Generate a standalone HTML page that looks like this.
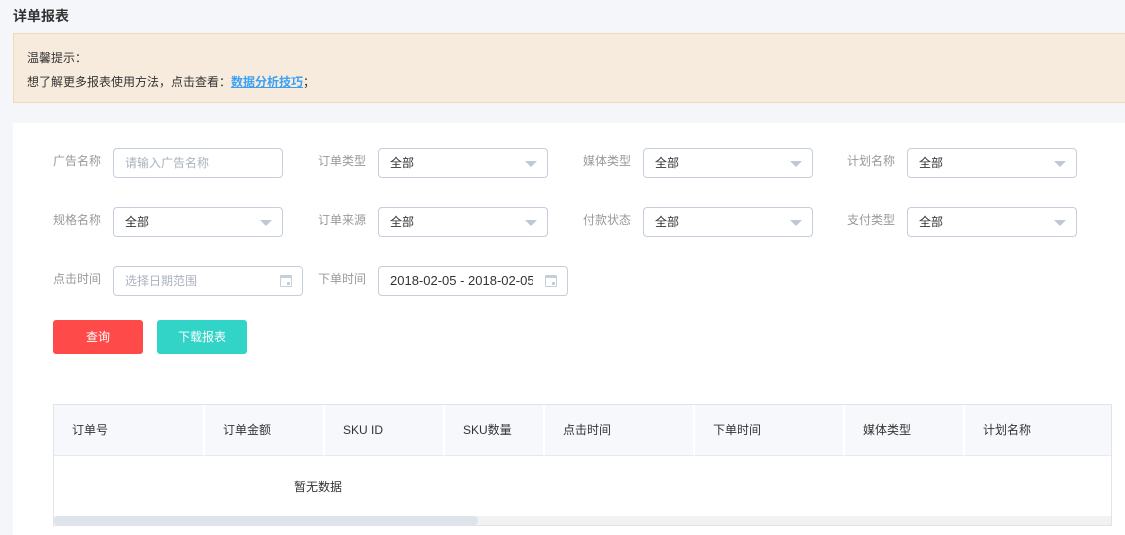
<!DOCTYPE html>
<html><head><meta charset="utf-8"><style>
*{box-sizing:border-box;margin:0;padding:0}
body{width:1125px;height:535px;background:#f5f6fa;font-family:"Liberation Sans","Noto Sans CJK SC",sans-serif;font-size:12px;color:#333;position:relative;overflow:hidden}
.a{position:absolute}
.title{left:13px;top:6px;font-size:14px;font-weight:bold;color:#333}
.notice{left:13px;top:33px;width:1120px;height:70px;background:#f7ebdd;border:1px solid #f5d9b7;padding:12px 0 0 13px;line-height:24px;color:#333}
.notice a{color:#3aa0f5;text-decoration:underline;font-weight:bold}
.panel{left:13px;top:123px;width:1112px;height:412px;background:#fff}
.lbl{color:#999;font-size:12px}
.inp{height:30px;border:1px solid #c5cedb;border-radius:4px;background:#fff;padding-left:11px;line-height:28px;color:#333}
.ph{color:#aab2bd}
.arr{position:absolute;right:10px;top:12px;width:0;height:0;border-left:6px solid transparent;border-right:6px solid transparent;border-top:6px solid #c0c8d4}
.cal{position:absolute;right:10px;top:8px;width:12px;height:12px;border:1.5px solid #c5cedb;border-top-width:3px;border-radius:1px}
.cal:after{content:"";position:absolute;right:1px;bottom:1px;width:3px;height:3px;background:#c5cedb}
.btn{height:34px;width:90px;border-radius:3px;color:#fff;text-align:center;line-height:34px}
.tbl{left:53px;top:404px;width:1059px;height:122px;border:1px solid #dfe4ec;background:#fff}
.th{position:absolute;top:0;height:51px;background:#f7f8fb;border-right:2px solid #fff;border-bottom:1px solid #e6e9ef;line-height:51px;padding-left:18px;color:#333}
</style></head><body>
<div class="a title">详单报表</div>
<div class="a notice">温馨提示：<br>想了解更多报表使用方法，点击查看：<a>数据分析技巧</a>；</div>
<div class="a panel"></div>

<div class="a lbl" style="left:53px;top:152px">广告名称</div>
<div class="a inp" style="left:113px;top:148px;width:170px"><span class="ph">请输入广告名称</span></div>
<div class="a lbl" style="left:318px;top:152px">订单类型</div>
<div class="a inp" style="left:378px;top:148px;width:170px">全部<i class="arr"></i></div>
<div class="a lbl" style="left:583px;top:152px">媒体类型</div>
<div class="a inp" style="left:643px;top:148px;width:170px">全部<i class="arr"></i></div>
<div class="a lbl" style="left:847px;top:152px">计划名称</div>
<div class="a inp" style="left:907px;top:148px;width:170px">全部<i class="arr"></i></div>

<div class="a lbl" style="left:53px;top:211px">规格名称</div>
<div class="a inp" style="left:113px;top:207px;width:170px">全部<i class="arr"></i></div>
<div class="a lbl" style="left:318px;top:211px">订单来源</div>
<div class="a inp" style="left:378px;top:207px;width:170px">全部<i class="arr"></i></div>
<div class="a lbl" style="left:583px;top:211px">付款状态</div>
<div class="a inp" style="left:643px;top:207px;width:170px">全部<i class="arr"></i></div>
<div class="a lbl" style="left:847px;top:211px">支付类型</div>
<div class="a inp" style="left:907px;top:207px;width:170px">全部<i class="arr"></i></div>

<div class="a lbl" style="left:53px;top:270px">点击时间</div>
<div class="a inp" style="left:113px;top:266px;width:190px"><span class="ph">选择日期范围</span><i class="cal"></i></div>
<div class="a lbl" style="left:318px;top:270px">下单时间</div>
<div class="a inp" style="left:378px;top:266px;width:190px;white-space:nowrap;overflow:hidden"><span style="display:inline-block;width:143px;overflow:hidden;font-size:13px;vertical-align:top">2018-02-05 - 2018-02-05</span><i class="cal"></i></div>

<div class="a btn" style="left:53px;top:320px;background:#ff4a4a">查询</div>
<div class="a btn" style="left:157px;top:320px;background:#33d4c8">下载报表</div>

<div class="a tbl">
<div class="th" style="left:0;width:151px">订单号</div>
<div class="th" style="left:151px;width:120px">订单金额</div>
<div class="th" style="left:271px;width:120px">SKU ID</div>
<div class="th" style="left:391px;width:100px">SKU数量</div>
<div class="th" style="left:491px;width:150px">点击时间</div>
<div class="th" style="left:641px;width:150px">下单时间</div>
<div class="th" style="left:791px;width:120px">媒体类型</div>
<div class="th" style="left:911px;width:146px;border-right:0">计划名称</div>
<div class="a" style="left:240px;top:73px;color:#333">暂无数据</div>
<div class="a" style="left:0;top:111px;width:1057px;height:9px;background:#f2f2f2"></div>
<div class="a" style="left:0;top:111px;width:424px;height:9px;background:#dfe4ea;border-radius:4px"></div>
</div>
</body></html>
